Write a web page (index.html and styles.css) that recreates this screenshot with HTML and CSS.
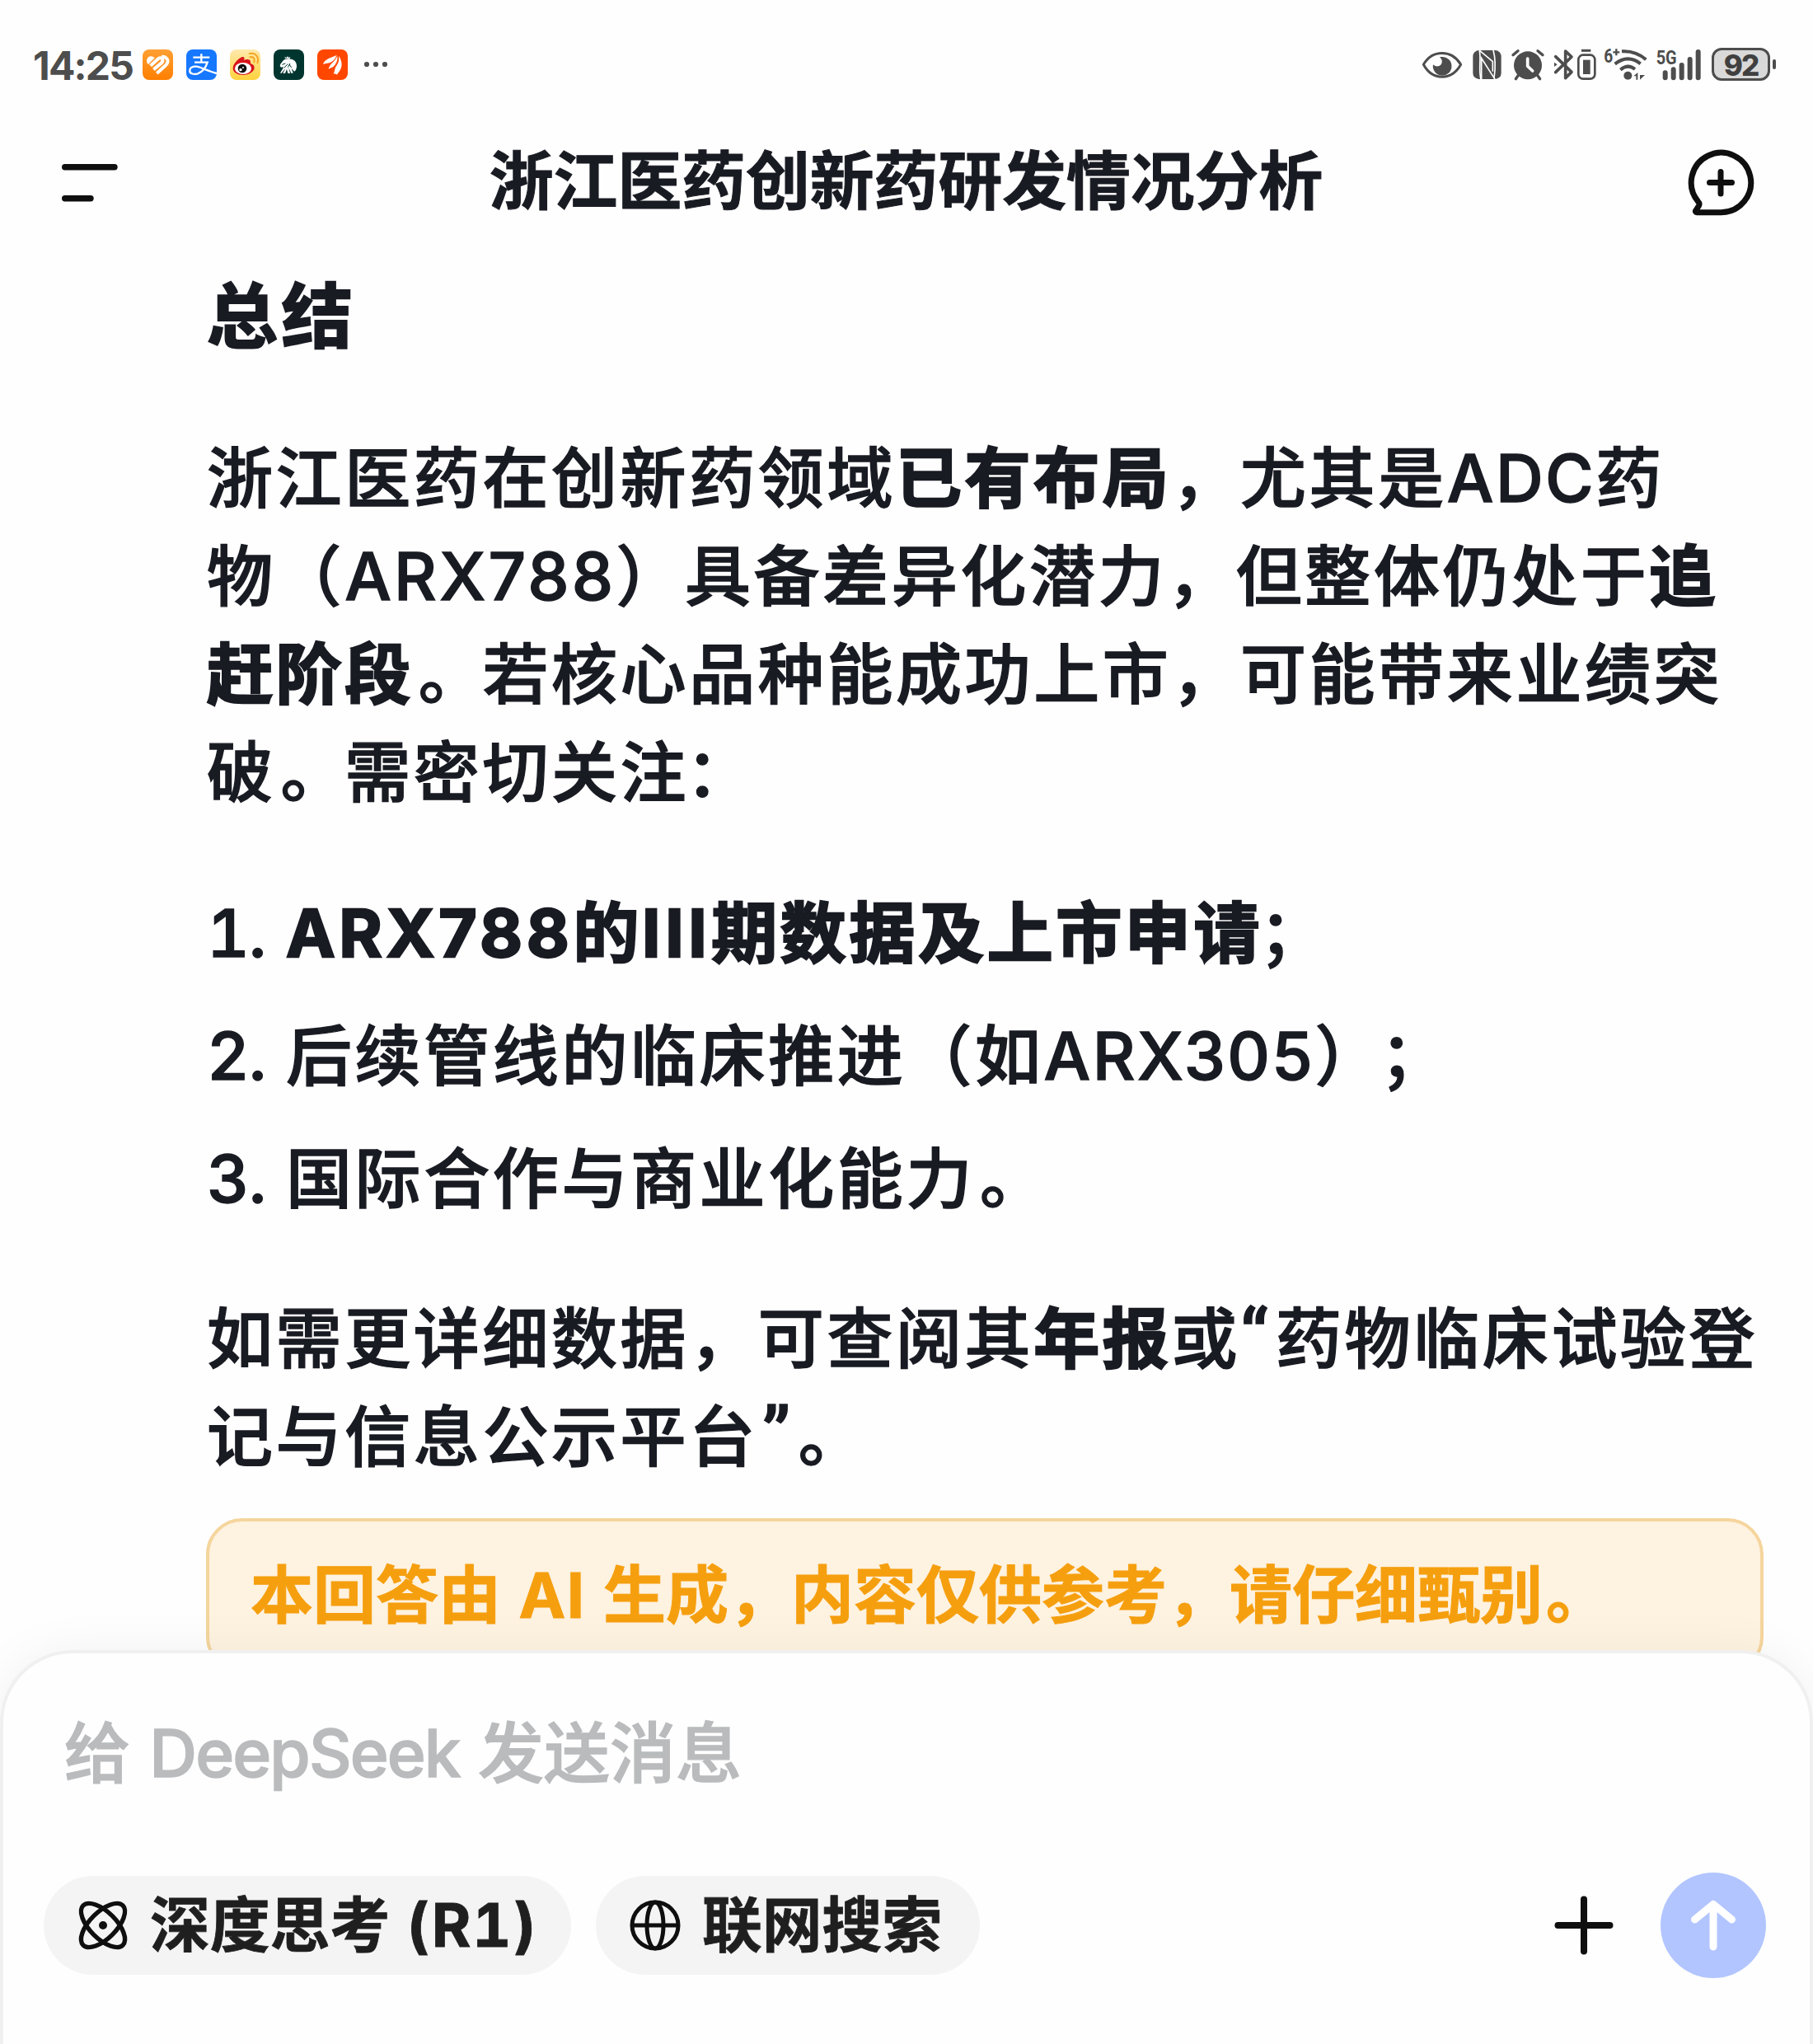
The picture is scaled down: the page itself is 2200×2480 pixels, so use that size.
FILE: index.html
```html
<!DOCTYPE html>
<html lang="zh-CN">
<head>
    <meta charset="UTF-8">
    <meta name="viewport" content="width=device-width, initial-scale=1.0">
    <title>浙江医药创新药研发情况分析</title>
    <link rel="stylesheet" href="styles.css">
</head>
<body>
    <div class="screen">
        <div class="status-bar">
            <div class="status-left">
                <span class="clock">14:25</span>
                <svg class="app-icon" viewBox="0 0 111 111">
                    <defs>
                        <linearGradient id="orange" x1="0" y1="0" x2="0" y2="1"><stop offset="0" stop-color="#ffa033"/><stop offset="1" stop-color="#ff7f00"/></linearGradient>
                        <linearGradient id="yellow" x1="0" y1="0" x2="0" y2="1"><stop offset="0" stop-color="#ffe9ae"/><stop offset="1" stop-color="#ffd23c"/></linearGradient>
                    </defs>
                    <rect width="111" height="111" rx="24" fill="url(#orange)"/>
                    <path d="M18 52C11 41 17 26 30 25c6 0 10 2 14 6L21 54z" fill="#fff"/>
                    <path d="M29 59L57 34Q67 27 72 35Q76 43 68 50L40 73M52 87L84 58Q97 44 88 33Q80 24 70 27" fill="none" stroke="#fff" stroke-width="12"/>
                </svg>
                <svg class="app-icon" viewBox="0 0 111 111">
                    <rect width="111" height="111" rx="24" fill="#1677ff"/>
                    <path d="M25 29H85M55 16V48M30 47H77C71 67 59 82 42 88C25 93 11 87 13 75C15 61 34 59 52 66C70 73 91 82 111 87" fill="none" stroke="#fff" stroke-width="7"/>
                </svg>
                <svg class="app-icon" viewBox="0 0 111 111">
                    <rect width="111" height="111" rx="24" fill="url(#yellow)"/>
                    <path d="M11 70C10 54 29 34 43 28c9-3 12 4 8 12c8-5 22-6 24 4v8c8 1 14 6 14 15c0 14-20 26-41 26S12 84 11 70z" fill="#d8141c"/>
                    <ellipse cx="48" cy="69" rx="30" ry="21" fill="#fff"/>
                    <circle cx="45" cy="69" r="16" fill="#111"/>
                    <circle cx="39" cy="74" r="5" fill="#fff"/><circle cx="48" cy="66" r="3" fill="#fff"/>
                    <path d="M73 28C86 25 92 34 88 46M71 15C94 10 107 27 100 49" fill="none" stroke="#f5a623" stroke-width="6" stroke-linecap="round"/>
                </svg>
                <svg class="app-icon" viewBox="0 0 111 111">
                    <rect width="111" height="111" rx="24" fill="#00352f"/>
                    <path d="M25 53L34 41C42 34 53 33 62 35C77 36 85 48 84 62C83 72 80 78 75 80L65 68L71 86H64L55 66L60 87H52L48 72L42 87H34L43 69L29 86H24L37 64L27 65L23 60z" fill="#fff"/>
                    <path d="M42 32L40 27L47 30L51 25L55 30L61 27L59 33z" fill="#fff"/>
                    <path d="M31 55L43 51M39 66L52 53M52 65L60 51M65 66L57 54" stroke="#00352f" stroke-width="3"/>
                </svg>
                <svg class="app-icon" viewBox="0 0 111 111">
                    <rect width="111" height="111" rx="24" fill="#ff4700"/>
                    <path d="M21 54C25 41 38 34 54 28L72 20C68 36 52 49 36 50C31 51 26 52 21 54z" fill="#fff"/>
                    <path d="M41 72C43 55 62 45 73 23C80 42 65 61 53 66C48 67 44 69 41 72z" fill="#fff"/>
                    <path d="M59 89C65 77 62 68 72 56C78 47 80 38 78 24C92 42 92 65 80 80C76 85 72 91 72 92C69 89 65 88 59 89z" fill="#fff"/>
                    <path d="M71 22C67 37 55 49 37 56M75 23C77 42 66 60 52 70" fill="none" stroke="#ff4700" stroke-width="3"/>
                </svg>
                <svg class="more" viewBox="0 0 30 8"><circle cx="4" cy="4" r="3.1"/><circle cx="15" cy="4" r="3.1"/><circle cx="26" cy="4" r="3.1"/></svg>
            </div>
            <div class="status-right">
                <!-- eye comfort -->
                <svg width="50" height="40" viewBox="75 54 150 120">
                    <path d="M82 115C115 60 184 60 218 115C184 175 115 175 82 115z" fill="none" stroke="#4d4d4d" stroke-width="9" stroke-linejoin="round"/>
                    <path d="M148 87A34 34 0 1 1 117 115C126 124 141 123 147 113C152 104 150 96 141 88z" fill="#4d4d4d"/>
                </svg>
                <!-- nfc -->
                <svg class="nfc" width="35" height="40" viewBox="261 54 105 120">
                    <rect x="262" y="63" width="103" height="105" rx="22" fill="#4d4d4d"/>
                    <path d="M284 62L334 104V140M293 168V92L343 170" fill="none" stroke="#fff" stroke-width="5"/>
                    <path d="M286 66C292 95 282 137 291 168M336 62C345 95 344 130 339 164" fill="none" stroke="#fff" stroke-width="5"/>
                </svg>
                <!-- alarm -->
                <svg class="alarm" width="40" height="40" viewBox="402 54 120 120">
                    <circle cx="462" cy="118" r="51" fill="#4d4d4d"/>
                    <path d="M408 80L426 65M516 80L498 65M430 150L418 167M494 150L506 167" stroke="#4d4d4d" stroke-width="10" stroke-linecap="round"/>
                    <path d="M461 93V121L479 138" fill="none" stroke="#fff" stroke-width="11" stroke-linecap="round"/>
                </svg>
                <!-- bluetooth + device battery -->
                <svg class="bt" width="52" height="40" viewBox="556 54 156 120">
                    <path d="M564 86L622 142L600 164V66L622 87L564 143" fill="none" stroke="#4d4d4d" stroke-width="11" stroke-linecap="round" stroke-linejoin="round"/>
                    <path d="M559 107L570 115L559 123z" fill="#4d4d4d"/>
                    <path d="M658 64H692" stroke="#4d4d4d" stroke-width="9"/>
                    <rect x="647" y="80" width="60" height="87" rx="17" fill="none" stroke="#4d4d4d" stroke-width="8"/>
                    <rect x="664" y="98" width="26" height="52" fill="#4d4d4d"/>
                </svg>
                <!-- wifi -->
                <svg class="wifi" width="54" height="40" viewBox="738 54 162 120">
                    <text x="739" y="108" class="wifi-gen" textLength="33" lengthAdjust="spacingAndGlyphs">6</text>
                    <path d="M772 70H796M784 58V82" stroke="#4d4d4d" stroke-width="7"/>
                    <path d="M804 67Q855 64 892 97M779 113Q825 76 872 112M799 134Q826 111 852 132" fill="none" stroke="#4d4d4d" stroke-width="12"/>
                    <circle cx="826" cy="155" r="15" fill="#4d4d4d"/>
                    <path d="M847 157L862 144V170H856V157zM870 146V170L888 153H870z" fill="#4d4d4d"/>
                </svg>
                <!-- signal -->
                <svg class="signal" width="56" height="40" viewBox="926 54 168 120">
                    <text x="928" y="115" class="net-gen" textLength="75" lengthAdjust="spacingAndGlyphs">5G</text>
                    <path d="M961 145V163M991 133V163M1021 117V163M1051 96V163M1081 69V163" stroke="#4d4d4d" stroke-width="18" stroke-linecap="round"/>
                </svg>
                <div class="battery"><span>92</span></div>
                <div class="battery-tip"></div>
            </div>
        </div>

        <header class="top-bar">
            <svg class="menu-icon" viewBox="0 0 68 46"><path d="M3.7 3.8H64M3.7 41.8H35" stroke="#0f0f0f" stroke-width="7.4" stroke-linecap="round"/></svg>
            <h1>浙江医药创新药研发情况分析</h1>
            <svg class="new-chat" viewBox="0 0 80 80">
                <path d="M40 75.7H11C9.5 75.7 9 74.5 9.7 73.5L13.5 67.5C14.5 65.5 14 64 12.5 62.5A36.2 36.2 0 1 1 40 75.7z" fill="none" stroke="#0f0f0f" stroke-width="7"/>
                <path d="M40 26.5V53M26.5 39.6H53.5" stroke="#0f0f0f" stroke-width="7" stroke-linecap="round"/>
            </svg>
        </header>

        <main class="answer">
            <h2>总结</h2>
            <p>浙江医药在创新药领域<b>已有布局</b>，尤其是<span class="en">ADC</span>药<br>物（<span class="code">ARX788</span>）具备差异化潜力，但整体仍处于<b>追</b><br><b>赶阶段</b><span class="stop">。</span>若核心品种能成功上市，可能带来业绩突<br>破<span class="stop">。</span>需密切关注<span class="colon">：</span></p>
            <ol>
                <li><span class="num">1.</span><span><b><span class="code">ARX788</span>的<span class="roman">III</span>期数据及上市申请</b><span class="colon">；</span></span></li>
                <li><span class="num">2.</span><span>后续管线的临床推进（如<span class="en">ARX305</span>）<span class="colon">；</span></span></li>
                <li><span class="num">3.</span><span>国际合作与商业化能力<span class="stop">。</span></span></li>
            </ol>
            <p>如需更详细数据，可查阅其<b>年报</b>或<span class="quote">“</span>药物临床试验登<br>记与信息公示平台<span class="quote close">”</span><span class="stop">。</span></p>
            <div class="notice">本回答由 <span class="ai">AI</span> 生成，内容仅供参考，请仔细甄别<span class="stop">。</span></div>
        </main>

        <footer class="composer">
            <div class="placeholder">给 <span class="brand">DeepSeek</span> 发送消息</div>
            <div class="tools">
                <button class="pill think">
                    <svg width="58" height="58" viewBox="0 0 58 58" fill="none" stroke="#0f0f0f" stroke-width="5.4">
                        <ellipse cx="29" cy="29" rx="34" ry="16" transform="rotate(45 29 29)"/>
                        <ellipse cx="29" cy="29" rx="34" ry="16" transform="rotate(-45 29 29)"/>
                        <circle cx="29" cy="29" r="5" fill="#0f0f0f" stroke="none"/>
                    </svg>
                    <span>深度思考 <span class="model">(R1)</span></span>
                </button>
                <button class="pill search">
                    <svg width="62" height="62" viewBox="0 0 62 62" fill="none" stroke="#0f0f0f" stroke-width="5">
                        <circle cx="31" cy="31" r="28"/>
                        <ellipse cx="31" cy="31" rx="10" ry="28"/>
                        <path d="M3 31H59"/>
                    </svg>
                    <span>联网搜索</span>
                </button>
                <svg class="add" viewBox="0 0 72 72"><path d="M36 4.5V67.5M4.5 36H67.5" stroke="#0f0f0f" stroke-width="8" stroke-linecap="round"/></svg>
                <button class="send">
                    <svg width="128" height="128" viewBox="0 0 128 128"><path d="M64 90V38.5M41.5 57L64 38.5L86.5 57" fill="none" stroke="#fff" stroke-width="9" stroke-linecap="round" stroke-linejoin="round"/></svg>
                </button>
            </div>
        </footer>
    </div>
</body>
</html>
```
FILE: styles.css
```css
* {
    box-sizing: border-box;
}
body {
    margin: 0;
    background-color: #fefefe;
    color: #191b23;
    font-family: Inter, "Noto Sans CJK SC", sans-serif;
    text-spacing-trim: space-all;
}
h1, h2, p, ol {
    margin: 0;
    padding: 0;
}
svg {
    display: block;
    flex: none;
    overflow: visible;
}
button {
    border: none;
    padding: 0;
    font-family: inherit;
}
.screen {
    width: 2200px;
    height: 2480px;
    overflow: hidden;
    display: flex;
    flex-direction: column;
}

/* status bar */
.status-bar {
    height: 156px;
    padding: 0 45px 0 40px;
    display: flex;
    justify-content: space-between;
    align-items: center;
    flex: none;
}
.status-left,
.status-right {
    display: flex;
    align-items: center;
}
.clock {
    width: 133px;
    padding-top: 3px;
    font-size: 48px;
    font-weight: 700;
    color: #4d4d4d;
    letter-spacing: -1.8px;
}
.app-icon {
    width: 37px;
    height: 37px;
    margin-right: 16px;
}
.more {
    width: 30px;
    height: 8px;
    margin-left: 3px;
    fill: #4d4d4d;
}
.nfc { margin-left: 12px; }
.alarm { margin-left: 12px; }
.bt { margin-left: 11px; }
.wifi { margin-left: 9px; }
.signal { margin-left: 9px; }
.wifi-gen,
.net-gen {
    font-family: Roboto, sans-serif;
    font-weight: 700;
    font-size: 72px;
    fill: #4d4d4d;
}
.battery {
    width: 71px;
    height: 40px;
    margin-left: 12px;
    border: 3px solid #4d4d4d;
    border-radius: 12px;
    background-color: #d9d9d9;
    color: #404040;
    font-size: 35px;
    font-weight: 800;
    line-height: 36px;
    letter-spacing: -2px;
    text-align: center;
}
.battery-tip {
    width: 4px;
    height: 12px;
    margin-left: 3px;
    border-radius: 2px;
    background-color: #4d4d4d;
}

/* title */
.top-bar {
    height: 132px;
    padding: 0 72px 0 75px;
    display: flex;
    justify-content: space-between;
    align-items: center;
    flex: none;
}
.menu-icon {
    width: 68px;
    height: 46px;
}
.top-bar h1 {
    margin-left: 8px;
    padding-bottom: 5px;
    font-size: 77.8px;
    line-height: 120px;
    font-weight: 700;
    -webkit-text-stroke: 1px #191b23;
}
.new-chat {
    width: 80px;
    height: 80px;
}

/* answer text */
.answer {
    flex: 1;
    padding: 34px 60px 0 250px;
    min-height: 0;
    font-size: 80px;
    line-height: 119px;
    font-weight: 500;
    letter-spacing: 3.6px;
    white-space: nowrap;
    -webkit-text-stroke: 1.4px currentColor;
}
.answer p,
.answer ol {
    padding-left: 1px;
}
.answer h2 {
    margin-bottom: 74px;
    font-size: 87.5px;
    line-height: 124px;
    font-weight: 900;
    -webkit-text-stroke: 0;
}
.answer b {
    font-weight: 700;
    -webkit-text-stroke: 2.4px currentColor;
}
.answer ol {
    margin: 76px 0 75px;
    list-style: none;
    display: flex;
    flex-direction: column;
    gap: 30px;
}
.answer li {
    display: flex;
}
.num {
    width: 96px;
    letter-spacing: -1px;
    font-variant-numeric: tabular-nums;
}
.en {
    letter-spacing: 2.4px;
}
.code {
    letter-spacing: 3.2px;
}
b .code {
    letter-spacing: 4.6px;
}
.roman {
    letter-spacing: 5.6px;
}
.quote {
    display: inline-block;
    width: 43px;
    font-family: Roboto, sans-serif;
    font-size: 90px;
    line-height: 1;
}
.close {
    padding-left: 5px;
}
/* full-width punctuation sits off its default place in the cell */
.stop {
    margin: 0 -6px 0 6px;
}
.colon {
    margin: 0 4px 0 -4px;
}
.notice {
    width: 1890px;
    height: 188px;
    margin-top: 40px;
    padding: 30px 50px 0;
    border: 4px solid #f5d59d;
    border-radius: 44px;
    background-color: #fef2e0;
    color: #f59f0f;
    font-size: 76px;
    font-weight: 700;
    letter-spacing: 0;
    word-spacing: 3.5px;
    -webkit-text-stroke: 1px currentColor;
}
.notice .stop {
    margin: 0 -4px 0 4px;
}
.ai {
    letter-spacing: 1.5px;
}

/* input panel */
.composer {
    position: relative;
    height: 478px;
    flex: none;
    padding: 62px 53px 0 49px;
    border: 4px solid #f0f0f0;
    border-bottom: none;
    border-radius: 88px 88px 0 0;
    background-color: #fefefe;
    box-shadow: 0 0 60px rgba(0, 0, 0, 0.05);
}
.placeholder {
    margin-left: 25px;
    height: 116px;
    line-height: 118px;
    font-size: 80px;
    font-weight: 500;
    color: #b9bbbd;
    white-space: nowrap;
    -webkit-text-stroke: 1.4px currentColor;
}
.brand {
    margin: 0 1px 0 2px;
    letter-spacing: -1.9px;
}
.tools {
    margin-top: 88px;
    display: flex;
    align-items: center;
}
.pill {
    height: 120px;
    border-radius: 60px;
    background-color: #f4f4f4;
    color: #1f1f1f;
    font-size: 72.8px;
    font-weight: 700;
    line-height: 114px;
    white-space: nowrap;
    -webkit-text-stroke: 0.8px currentColor;
    display: flex;
    align-items: center;
}
.think {
    width: 640px;
    padding-left: 43px;
    gap: 28px;
}
.model {
    margin-left: 3px;
    letter-spacing: 1.8px;
    font-variant-numeric: tabular-nums;
}
.search {
    width: 466px;
    margin-left: 30px;
    padding-left: 41px;
    gap: 26px;
}
.add {
    width: 72px;
    height: 72px;
    margin-left: auto;
}
.send {
    width: 128px;
    height: 128px;
    margin-left: 57px;
    border-radius: 50%;
    background-color: #b2c5ff;
}
```
